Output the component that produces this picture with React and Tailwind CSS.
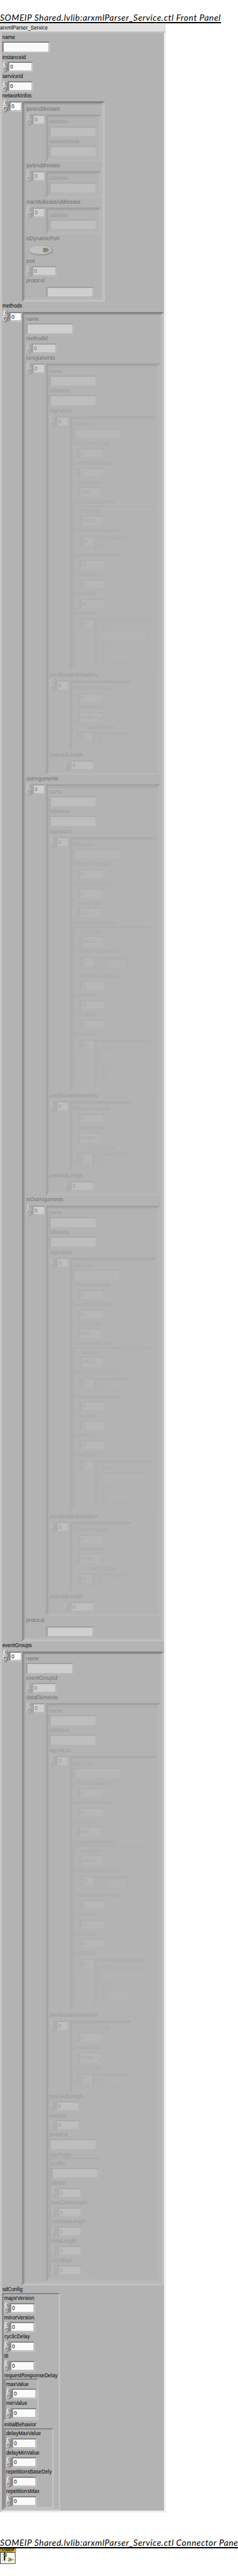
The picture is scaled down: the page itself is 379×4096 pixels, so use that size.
import React from "react";

const BEVEL = "border-t-[#848484] border-l-[#8e8e8e] border-r-[#c1c1c1] border-b-[#c1c1c1]";

const str = (label) => ({ kind: "string", label });
const num = (label) => ({ kind: "number", label });
const arr = (label, items, extra = {}) => ({ kind: "array", label, items, ...extra });
const cluster = (label, items, width) => ({ kind: "cluster", label, items, width });

const computeMethod = cluster("compuMethodInfo", [
  { kind: "enum", label: "category", value: "NULL", size: "h-[41px]", shift: "ml-[11px]" },
  { kind: "numberArray", label: "rationalNumerators", size: "h-[51px]", gap: "pt-[4px]" },
  num("rationalDenominator"),
  num("maxValue"),
  num("minValue"),
  arr("textTable", [str("name"), num("value")], { width: "w-[115px]" }),
], "w-[165px]");

const signals = (label, typeSize, typeShift) =>
  arr(label, [
    str("fullName"),
    num("OffsetInPayload"),
    num("LengthInPayload"),
    { kind: "enum", label: "valueType", value: "null", size: typeSize, shift: typeShift, late: typeSize === "h-[42px]" },
    computeMethod,
  ], { width: "w-[180px]" });

const argument = (label) =>
  arr(label, [
    str("name"),
    str("fullName"),
    signals("SignalList", "h-[41px]", "ml-[11px]"),
    arr("preAllocatedHeaders", [
      num("OffsetInPayload"),
      { kind: "enum", label: "headerType", value: "ArraySi", cut: true, size: "h-[41px]", shift: "ml-[11px]" },
      { kind: "numberArray", label: "headerData", size: "h-[49px]", gap: "pt-[2px]", shift: "ml-[30px]" },
    ], { width: "w-[129px]" }),
    { kind: "number", label: "payloadLength", size: "h-[42px]", gap: "pt-[2px]", body: "pl-[30px]" },
  ], { width: "w-[237px]" });

const protocolRight = { kind: "string", label: "protocol", size: "h-[44px]", gap: "pt-[4px]", body: "pl-[42px]" };

const service = [
  str("name"),
  num("instanceId"),
  num("serviceId"),
  arr("networkInfos", [
    arr("ipv4Addresses", [str("address"), str("networkMask")], { width: "w-[115px]" }),
    arr("ipv6Addresses", [str("address")], { width: "w-[115px]" }),
    arr("macMulticastAddresses", [str("address")], { width: "w-[115px]" }),
    { kind: "boolean", label: "isDynamicPort" },
    num("port"),
    protocolRight,
  ], { width: "w-[172px]" }),
  arr("methods", [
    str("name"),
    num("methodId"),
    argument("inArguments"),
    argument("outArguments"),
    argument("inOutArguments"),
    protocolRight,
  ], { width: "w-[294px]" }),
  arr("eventGroups", [
    str("name"),
    num("eventGroupId"),
    arr("dataElements", [
      str("name"),
      str("fullName"),
      signals("signalList", "h-[42px]", ""),
      arr("preAllocatedHeaders", [
        num("OffsetInPayload"),
        { kind: "enum", label: "headerType", value: "ArraySi", cut: true, size: "h-[42px]", late: true },
        { kind: "numberArray", label: "headerData", size: "h-[51px]", gap: "pt-[4px]" },
      ], { width: "w-[129px]" }),
      num("payloadLength"),
      num("eventId"),
      str("protocol"),
      cluster("e2eProps", [
        str("profile"),
        num("dataId"),
        num("maxDataLength"),
        num("minDataLength"),
        num("dataLength"),
        num("crcOffset"),
      ], "w-[108px]"),
    ], { width: "w-[237px]" }),
  ], { width: "w-[294px]" }),
  cluster("sdConfig", [
    num("majorVersion"),
    num("minorVersion"),
    num("cyclicDelay"),
    num("ttl"),
    cluster("requestResponseDelay", [num("maxValue"), num("minValue")], "w-[73px]"),
    cluster("initialBehavior", [
      num("delayMaxValue"),
      num("delayMinValue"),
      num("repetitionsBaseDely"),
      num("repetitionsMax"),
    ], "w-[104px]"),
  ], "w-[121px]"),
];

function Text({ children, className = "" }) {
  return (
    <div className={`origin-left scale-x-[0.89] whitespace-nowrap text-[12px] leading-[16px] ${className}`}>
      {children}
    </div>
  );
}

function Label({ children, className = "" }) {
  return <Text className={`h-[16px] w-0 shrink-0 pl-[1px] ${className}`}>{children}</Text>;
}

function Spinner({ className }) {
  return (
    <svg viewBox="0 0 14 27" preserveAspectRatio="none" className={`shrink-0 ${className}`}>
      <ellipse cx="7.3" cy="13.7" rx="6.7" ry="13.2" fill="#6e6e6e" />
      <ellipse cx="6.6" cy="13.2" rx="6.3" ry="12.8" fill="url(#knob)" />
      <path d="M1 13.1h11.6" stroke="#8a8a8a" strokeWidth="1" />
      <path d="M1 14.1h11.6" stroke="#ececec" strokeWidth="0.9" />
      <path d="M3.8 9.6 6.6 4.6l2.8 5" fill="none" stroke="#f0f0f0" strokeWidth="0.9" />
      <path d="M6.6 4.4l2.6 4.8" fill="none" stroke="#333" strokeWidth="1.2" />
      <path d="M9.6 17.5H4l2.6 5.4" fill="none" stroke="#444" strokeWidth="1.1" />
      <path d="M9.6 17.8l-2.8 5.2" fill="none" stroke="#f0f0f0" strokeWidth="0.9" />
    </svg>
  );
}

function NumberControl() {
  return (
    <div className="flex h-[24px] w-[65px] items-start">
      <Spinner className="h-[24px] w-[12px]" />
      <div className={`mt-[2px] h-[22px] w-[53px] border-t-[3px] border-r-[4px] border-b-[4px] border-l-[4px] bg-[#fafafa] ${BEVEL}`}>
        <Text className="w-0 pl-[2px] leading-[15px]">0</Text>
      </div>
    </div>
  );
}

function IndexControl() {
  return (
    <div className="flex w-[42px] shrink-0 items-start">
      <Spinner className="h-[27px] w-[14px]" />
      <div className={`mt-[4px] h-[22px] w-[27px] border-t-[3px] border-r-[3px] border-b-[4px] border-l-[4px] bg-[#fafafa] ${BEVEL}`}>
        <Text className="w-0 pl-[2px] leading-[15px]">0</Text>
      </div>
    </div>
  );
}

function StringField({ label, size = "h-[41px]", gap = "pt-[1px]", body = "" }) {
  return (
    <div className={size}>
      <Label>{label}</Label>
      <div className={`${gap} ${body}`}>
        <div className={`h-[23px] w-[100px] border-x-[4px] border-y-[3px] bg-[#fafafa] ${BEVEL}`} />
      </div>
    </div>
  );
}

function NumberField({ label, size = "h-[40px]", gap = "", body = "" }) {
  return (
    <div className={size}>
      <Label>{label}</Label>
      <div className={`${gap} ${body}`}>
        <NumberControl />
      </div>
    </div>
  );
}

function EnumField({ label, value, size, shift = "", late, cut }) {
  return (
    <div className={size}>
      <Label className={shift}>{label}</Label>
      <div className={`flex items-start ${late ? "pt-[1px]" : ""}`}>
        <Spinner className="h-[26px] w-[12px]" />
        <div className={`mt-[1px] h-[23px] w-[49px] border-x-[4px] border-y-[3px] bg-[#fafafa] ${BEVEL}`}>
          <div className="flex">
            <Text className="pl-[2px] leading-[17px]">
              {cut ? <>Array<span className="opacity-40">Si</span></> : value}
            </Text>
            {cut && (
              <svg viewBox="0 0 6 6" className="mt-[9px] -ml-[4px] h-[6px] w-[6px] shrink-0">
                <path d="M0 0 4 4M5.5 1.5v4h-4z" fill="#444" stroke="#444" strokeWidth="0.8" />
              </svg>
            )}
          </div>
        </div>
      </div>
    </div>
  );
}

function NumberArrayField({ label, size, gap, shift = "" }) {
  return (
    <div className={size}>
      <Label className={shift}>{label}</Label>
      <div className={`flex items-start ${gap}`}>
        <div className="-mt-[4px]"><IndexControl /></div>
        <div className={`h-[31px] w-[72px] border-[4px] ${BEVEL}`}>
          <div className="-mt-[1px] opacity-40"><NumberControl /></div>
        </div>
      </div>
    </div>
  );
}

function BooleanField({ label }) {
  return (
    <div className="h-[47px]">
      <Label>{label}</Label>
      <svg viewBox="0 0 60 28" className="mt-[2px] h-[28px] w-[60px]">
        <ellipse cx="33" cy="16.5" rx="24.5" ry="10" fill="#777" opacity="0.55" />
        <ellipse cx="30.2" cy="13.6" rx="24.4" ry="9.8" fill="#5c5c5c" />
        <ellipse cx="30" cy="13.3" rx="23.4" ry="8.9" fill="#f4f4f4" />
        <ellipse cx="30" cy="13.6" rx="22.4" ry="8" fill="#d6d6d6" />
        <path d="M36 9h5q6 1 8 4.6-2 3.600-8 4.600h-5z" fill="#275b00" />
      </svg>
    </div>
  );
}

// Borders snap down to whole device pixels, so each bevel adds the lost fraction back as padding.
function ArrayField({ label, items, width }) {
  return (
    <div>
      <Label>{label}</Label>
      <div className="flex items-start">
        <IndexControl />
        <div className={`mt-[4px] border-[4px] p-[0.11px] ${width} ${BEVEL}`}>
          <div className={`border-t-[3px] border-r-[4px] border-b-[4px] border-l-[3px] pt-[0.43px] pr-[0.11px] pb-[0.11px] pl-[0.43px] opacity-40 ${BEVEL}`}>
            <Fields items={items} />
          </div>
        </div>
      </div>
    </div>
  );
}

function ClusterField({ label, items, width }) {
  return (
    <div>
      <Label>{label}</Label>
      <div className={`-mt-[1px] border-x-[4px] border-t-[3px] border-b-[4px] px-[0.11px] pt-[0.43px] pb-[0.11px] ${width} ${BEVEL}`}>
        <Fields items={items} />
      </div>
    </div>
  );
}

const RENDERERS = {
  string: StringField,
  number: NumberField,
  enum: EnumField,
  numberArray: NumberArrayField,
  boolean: BooleanField,
  array: ArrayField,
  cluster: ClusterField,
};

function Fields({ items }) {
  return (
    <div className="flex flex-col">
      {items.map((item, i) => {
        const Field = RENDERERS[item.kind];
        return <Field key={i} {...item} />;
      })}
    </div>
  );
}

function Heading({ children, className }) {
  return (
    <h1 className={`w-max border-b-[2.700px] border-black font-[Lato,sans-serif] text-[18px] leading-[18px] whitespace-pre text-black italic ${className}`}>
      {children}
    </h1>
  );
}

function ConnectorIcon() {
  return (
    <svg viewBox="0 0 32 32" className="mt-[0.4px] block h-[32px] w-[32px]">
      <rect x="0.5" y="0.5" width="31" height="31" fill="#fff" stroke="#000" />
      <rect x="1" y="1" width="30" height="7" fill="#ffc40d" />
      <path d="M1 8.500h30" stroke="#000" />
      <text x="2.500" y="7" fontFamily="Liberation Sans" fontWeight="700" fontSize="7" textLength="27" lengthAdjust="spacingAndGlyphs">SOMEIP</text>
      <path d="M4 12.500h3M4 18.500h3M4 24.500h3" stroke="#777" />
      <rect x="8" y="9" width="3" height="16" fill="#1a1a1a" />
      <path d="M7.500 26h4l-2 2z" fill="#777" />
      <path d="M7 14l4-2 3-2v8l-3-2.500z" fill="#3fae5a" stroke="#1d6b33" strokeWidth="0.6" />
      <path d="M16 21.500h3M26 23.500h3" stroke="#e00000" />
      <path d="M16 25.500h3" stroke="#0000d0" />
      <path d="M18.500 19v9l8.500-4.500z" fill="#fff200" stroke="#6b6300" strokeWidth="0.8" />
      <path d="M19.800 23.500h3.400M21.500 21.800v3.400" stroke="#000" />
    </svg>
  );
}

export default function App() {
  return (
    <main className="h-[5332px] w-[493px] overflow-hidden bg-white font-['Liberation_Sans',Arial,sans-serif] text-black [zoom:0.7682]">
      <svg className="absolute h-0 w-0" aria-hidden="true">
        <defs>
          <linearGradient id="knob" x1="0" y1="0" x2="1" y2="0.35">
            <stop offset="0" stopColor="#a8a8a8" />
            <stop offset="0.35" stopColor="#dedede" />
            <stop offset="0.7" stopColor="#bcbcbc" />
            <stop offset="1" stopColor="#8c8c8c" />
          </linearGradient>
        </defs>
      </svg>
      <div className="flex h-[49px] flex-col pt-[27px]">
        <Heading className="tracking-[0.720px]">SOMEIP Shared.lvlib:arxmlParser_Service.ctl Front Panel</Heading>
      </div>
      <section className="h-[5152px] w-[344px]">
        <div className="h-[16px] bg-[#e1e1e1]">
          <Text>arxmlParser_Service</Text>
        </div>
        <div className="h-[5136px] border-[4px] border-t-[#bdbdbd] border-r-[#ededed] border-b-[#ededed] border-l-[#c6c6c6] bg-[#b3b3b3] pt-[0.2px] pl-[0.1px]">
          <Fields items={service} />
        </div>
      </section>
      <div className="pt-[53px]">
        <Heading className="tracking-[0.720px]">SOMEIP Shared.lvlib:arxmlParser_Service.ctl Connector Pane</Heading>
      </div>
      <ConnectorIcon />
    </main>
  );
}
